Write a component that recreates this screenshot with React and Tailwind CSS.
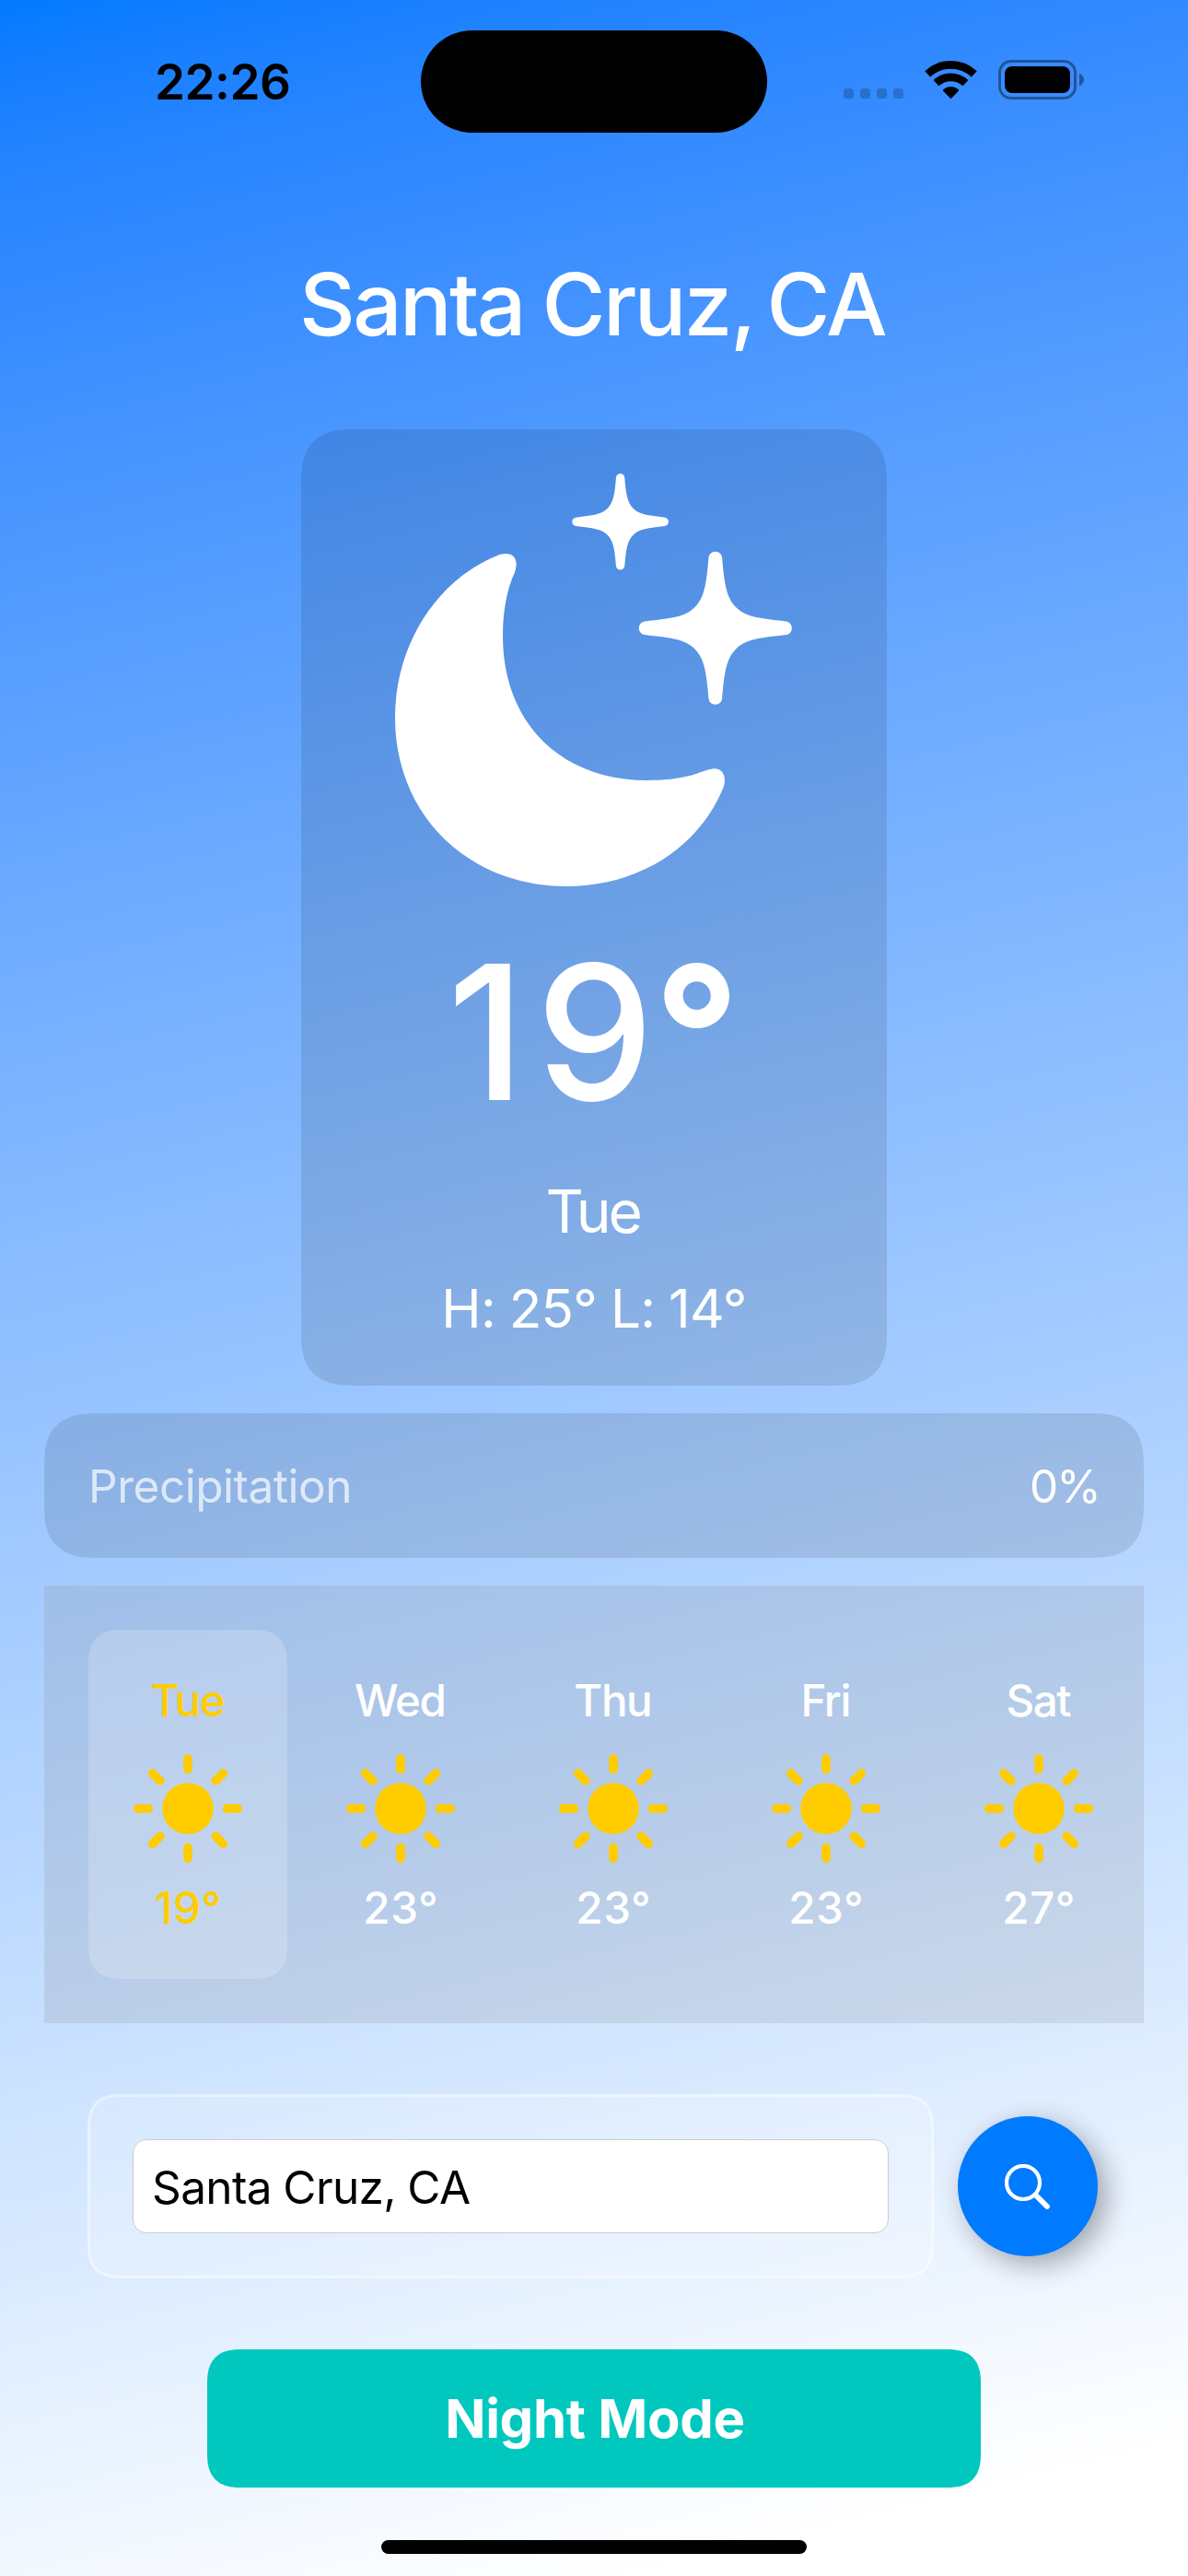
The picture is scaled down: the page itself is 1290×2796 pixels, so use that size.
import React from "react";

const forecast = [
  { day: "Tue", temp: "19°", active: true },
  { day: "Wed", temp: "23°" },
  { day: "Thu", temp: "23°" },
  { day: "Fri", temp: "23°" },
  { day: "Sat", temp: "27°" },
];

function SignalDots() {
  return (
    <svg className="h-[11px] w-[65px]" viewBox="0 0 65 11" fill="#000" fillOpacity="0.2">
      <rect x="0" width="11" height="11" rx="3.5" />
      <rect x="18" width="11" height="11" rx="3.5" />
      <rect x="36" width="11" height="11" rx="3.5" />
      <rect x="54" width="11" height="11" rx="3.5" />
    </svg>
  );
}

function WifiIcon() {
  return (
    <svg className="h-[43px] w-[57px]" viewBox="-28.5 -42 57 43">
      <path d="M-25.3 -26.6 A37 37 0 0 1 25.3 -26.6" fill="none" stroke="#000" strokeWidth="8.6" />
      <path d="M-16 -16.8 A23.3 23.3 0 0 1 16 -16.8" fill="none" stroke="#000" strokeWidth="8.6" />
      <path d="M-8.1 -8 C-8.8 -8.8 -8.8 -9.4 -8 -10 C-3.4 -13.9 3.4 -13.9 8 -10 C8.8 -9.4 8.8 -8.8 8.1 -8 L0.7 -0.6 Q0 0 -0.7 -0.6 Z" />
    </svg>
  );
}

function BatteryIcon() {
  return (
    <svg className="h-[43px] w-[93px]" viewBox="0 0 93 43">
      <rect x="1.5" y="1.5" width="82" height="40" rx="12.5" fill="none" stroke="#000" strokeOpacity="0.4" strokeWidth="3" />
      <rect x="7" y="7" width="71" height="29" rx="8" />
      <path d="M88 14.5 C91 16 93 18.5 93 21.5 C93 24.5 91 27 88 28.5 Z" fillOpacity="0.4" />
    </svg>
  );
}

const starPath =
  "M7.3 -77 C9.8 -47 12 -33 22.5 -22.5 C33 -12 47 -10.8 77 -7.3 C85 -5.6 85 5.6 77 7.3 C47 10.8 33 12 22.5 22.5 C12 33 9.8 47 7.3 77 C5.6 85 -5.6 85 -7.3 77 C-9.8 47 -12 33 -22.5 22.5 C-33 12 -47 10.8 -77 7.3 C-85 5.6 -85 -5.6 -77 -7.3 C-47 -10.8 -33 -12 -22.5 -22.5 C-12 -33 -9.8 -47 -7.3 -77 C-5.6 -85 5.6 -85 7.3 -77 Z";

function MoonStars() {
  return (
    <svg className="h-[520px] w-[636px]" viewBox="327 466 636 520" fill="#fff">
      <path d="M537.6 604 C472 632 429 702 429 779 C429 884 508 962 615 962 C692 962 757 922 785 856 C790 844 785 833 774 834.4 C765 835.5 758 840.5 742 843.6 C730 846 718 847 703 847 C609 847 546 785 546 690 C546 664 550.5 639 558.8 621.5 C563 610 560 601 549 601 C545 601 541.5 602.3 537.6 604 Z" />
      <path d={starPath} transform="translate(776.8 681.8)" />
      <path d={starPath} transform="translate(673.6 566.3) scale(0.63)" />
    </svg>
  );
}

function SunIcon() {
  return (
    <svg className="mt-[30px] h-[118px] w-[118px]" viewBox="-59 -59 118 118" fill="#fc0" stroke="#fc0" strokeWidth="9.6" strokeLinecap="round">
      <circle r="27.8" stroke="none" />
      <path d="M0 -54.2V-42.6M0 54.2V42.6M-54.2 0H-42.6M54.2 0H42.6M-38.2 -38.2L-30.2 -30.2M38.2 -38.2L30.2 -30.2M-38.2 38.2L-30.2 30.2M38.2 38.2L30.2 30.2" />
    </svg>
  );
}

function SearchIcon() {
  return (
    <svg className="mt-[1px] h-[50px] w-[50px]" viewBox="0 0 50 50" fill="none" stroke="#fff" strokeLinecap="round">
      <circle cx="20" cy="20" r="18" strokeWidth="4.2" />
      <path d="M33.5 33.5L46 46" strokeWidth="5.8" />
    </svg>
  );
}

function DayTile({ day, temp, active }) {
  return (
    <div
      className={
        active
          ? "flex h-[379px] w-[215.6px] shrink-0 flex-col items-center rounded-[38px] bg-white/20 pt-[49px] text-[#ffcc00] [corner-shape:superellipse(1.4)]"
          : "flex h-[379px] w-[215.6px] shrink-0 flex-col items-center pt-[49px] text-white"
      }
    >
      <span className="pr-[1px] text-[47.5px] leading-[56px] font-[550] tracking-[-1.4px]">{day}</span>
      <SunIcon />
      <span className="mt-[21px] pl-[1px] text-[47.5px] leading-[56px] font-[550] tracking-[0.6px]">{temp}</span>
    </div>
  );
}

export default function App() {
  return (
    <div className="flex h-[2796px] w-[1290px] flex-col items-center overflow-hidden bg-[linear-gradient(166.5deg_in_oklab,#007aff_0%,#ffffff_95.5%)] font-['Inter',sans-serif]">
      <header className="flex h-[177px] w-full shrink-0 items-center">
        <div className="w-[457px] pl-[168px] text-[53px] leading-[62px] font-semibold tracking-[-0.5px] text-black">22:26</div>
        <div className="h-[111px] w-[376px] rounded-full bg-black" />
        <div className="flex flex-1 items-end pb-[5px] pl-[83px]">
          <div className="flex pb-[1px]">
            <SignalDots />
          </div>
          <div className="ml-[23px] flex items-end gap-[23px]">
            <WifiIcon />
            <BatteryIcon />
          </div>
        </div>
      </header>

      <h1 className="mt-[105px] pr-[4px] text-[94px] leading-[96px] font-medium tracking-[-2.5px] whitespace-nowrap text-white">
        <span className="[word-spacing:-3px]">Santa Cruz</span>
        <span className="[word-spacing:-8px]">, CA</span>
      </h1>

      <section className="mt-[88px] flex h-[1038px] w-[636px] shrink-0 flex-col items-center rounded-[58px] bg-black/10 text-white [corner-shape:superellipse(1.4)]">
        <MoonStars />
        <div className="mt-[14px] pr-[1px] text-[203px] leading-[240px] font-medium">
          <span className="tracking-[12px]">1</span>
          <span className="tracking-[0px]">9</span>
          <span className="font-bold">°</span>
        </div>
        <div className="mt-[36px] pr-[3px] text-[64px] leading-[78px] tracking-[-3.3px]">Tue</div>
        <div className="mt-[30px] text-[58.3px] leading-[72px] tracking-[-0.7px] [word-spacing:-1px]">H: 25° L: 14°</div>
      </section>

      <section className="mt-[30px] flex h-[157px] w-[1194px] shrink-0 items-center justify-between rounded-[58px] bg-black/10 px-[48px] text-[49.5px] leading-[60px] [corner-shape:superellipse(1.4)]">
        <span className="tracking-[-0.47px] text-white/70">Precipitation</span>
        <span className="tracking-[-1.9px] text-white">0%</span>
      </section>

      <section className="mt-[30px] flex h-[475px] w-[1194px] shrink-0 gap-[15.4px] overflow-hidden bg-[#8e8e93]/20 pt-[48px] pl-[48px]">
        {forecast.map((item) => (
          <DayTile key={item.day} {...item} />
        ))}
      </section>

      <section className="mt-[77px] flex w-full shrink-0 items-center gap-[26px] pl-[95px]">
        <div className="h-[200px] w-[919px] rounded-[38px] border-3 border-white/50 bg-white/20 bg-clip-padding p-[46px] [corner-shape:superellipse(1.4)]">
          <input
            className="h-[102px] w-full rounded-[15px] border border-[#cccccc] bg-white pt-[2px] pr-[20px] pl-[20px] text-[49.5px] leading-[60px] tracking-[-0.6px] text-black outline-none [word-spacing:-1px]"
            defaultValue="Santa Cruz, CA"
          />
        </div>
        <button className="flex h-[152px] w-[152px] items-center justify-center rounded-full bg-[#007aff] shadow-[9px_9px_30px_rgba(0,0,0,0.33)]">
          <SearchIcon />
        </button>
      </section>

      <button className="mt-[77px] h-[150px] w-[840px] shrink-0 rounded-[38px] bg-[#00c8be] pl-[2px] text-[58px] leading-[70px] font-bold tracking-[-0.28px] text-white [corner-shape:superellipse(1.4)]">
        Night Mode
      </button>

      <div className="mt-[57px] h-[15px] w-[462px] shrink-0 rounded-full bg-black" />
    </div>
  );
}
